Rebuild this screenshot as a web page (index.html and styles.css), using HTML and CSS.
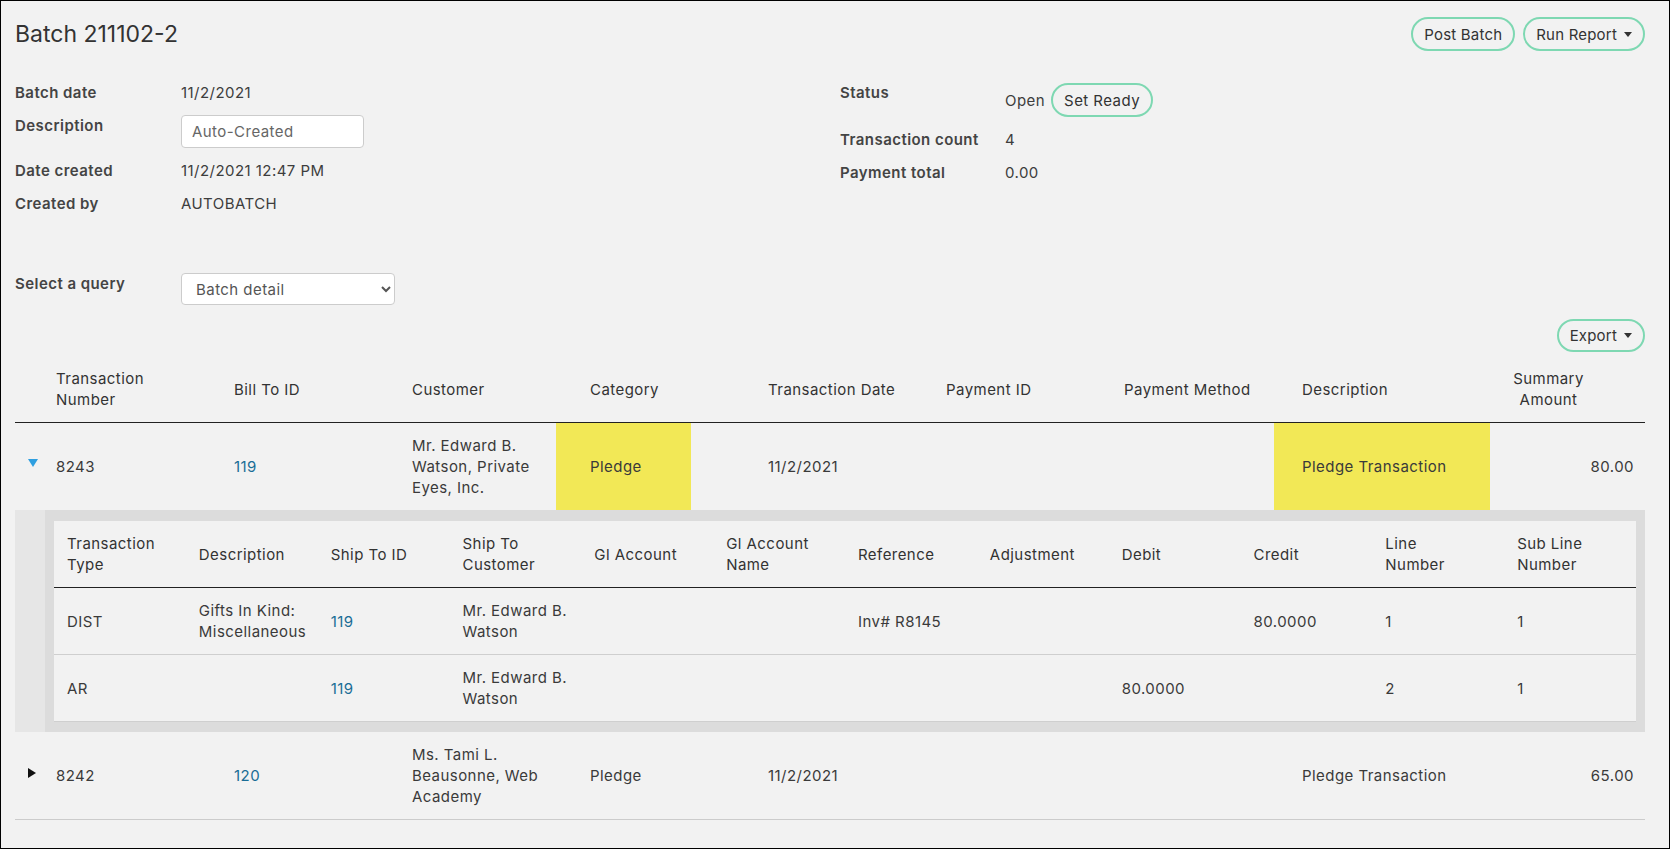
FILE: index.html
```html
<!DOCTYPE html>
<html lang="en">
<head>
    <meta charset="UTF-8">
    <meta name="viewport" content="width=device-width, initial-scale=1.0">
    <title>Batch 211102-2</title>
    <link rel="stylesheet" href="styles.css">
</head>
<body>
    <div class="page">
        <header class="top">
            <h1>Batch 211102-2</h1>
            <div class="actions">
                <button class="pill">Post Batch</button>
                <button class="pill">Run Report <svg class="caret" width="8" height="5" viewBox="0 0 8 5"><path d="M0 0h8L4 5z"/></svg></button>
            </div>
        </header>

        <section class="info">
            <div class="fields">
                <div class="field"><span class="label">Batch date</span><span class="value">11/2/2021</span></div>
                <div class="field"><span class="label">Description</span><input class="text-input" type="text" value="Auto-Created"></div>
                <div class="field"><span class="label">Date created</span><span class="value">11/2/2021 12:47 PM</span></div>
                <div class="field"><span class="label">Created by</span><span class="value">AUTOBATCH</span></div>
            </div>
            <div class="fields right">
                <div class="field status"><span class="label">Status</span><span class="value status-value">Open <button class="pill">Set Ready</button></span></div>
                <div class="field"><span class="label">Transaction count</span><span class="value">4</span></div>
                <div class="field"><span class="label">Payment total</span><span class="value">0.00</span></div>
            </div>
        </section>

        <div class="field query">
            <span class="label">Select a query</span>
            <select class="query-select">
                <option>Batch detail</option>
            </select>
        </div>

        <div class="toolbar">
            <button class="pill small">Export <svg class="caret" width="8" height="5" viewBox="0 0 8 5"><path d="M0 0h8L4 5z"/></svg></button>
        </div>

        <div class="batch-table">
            <div class="row head">
                <div class="cell"></div>
                <div class="cell">Transaction<br>Number</div>
                <div class="cell">Bill To ID</div>
                <div class="cell">Customer</div>
                <div class="cell">Category</div>
                <div class="cell">Transaction Date</div>
                <div class="cell">Payment ID</div>
                <div class="cell">Payment Method</div>
                <div class="cell">Description</div>
                <div class="cell amount">Summary<br>Amount</div>
            </div>

            <div class="row open">
                <div class="cell toggle"><svg class="arrow-down" width="10" height="8" viewBox="0 0 10 8"><path d="M0 0h10L5 8z"/></svg></div>
                <div class="cell">8243</div>
                <div class="cell"><a href="#">119</a></div>
                <div class="cell">Mr. Edward B.<br>Watson, Private<br>Eyes, Inc.</div>
                <div class="cell hl hl-cat">Pledge</div>
                <div class="cell">11/2/2021</div>
                <div class="cell"></div>
                <div class="cell"></div>
                <div class="cell hl hl-desc">Pledge Transaction</div>
                <div class="cell amount">80.00</div>
            </div>

            <div class="detail">
                <div class="detail-box">
                    <div class="sub">
                        <div class="sub-row sub-head">
                            <div class="sub-cell">Transaction<br>Type</div>
                            <div class="sub-cell">Description</div>
                            <div class="sub-cell">Ship To ID</div>
                            <div class="sub-cell">Ship To<br>Customer</div>
                            <div class="sub-cell">Gl Account</div>
                            <div class="sub-cell">Gl Account<br>Name</div>
                            <div class="sub-cell">Reference</div>
                            <div class="sub-cell">Adjustment</div>
                            <div class="sub-cell">Debit</div>
                            <div class="sub-cell">Credit</div>
                            <div class="sub-cell">Line<br>Number</div>
                            <div class="sub-cell">Sub Line<br>Number</div>
                        </div>
                        <div class="sub-row">
                            <div class="sub-cell">DIST</div>
                            <div class="sub-cell">Gifts In Kind:<br>Miscellaneous</div>
                            <div class="sub-cell"><a href="#">119</a></div>
                            <div class="sub-cell">Mr. Edward B.<br>Watson</div>
                            <div class="sub-cell"></div>
                            <div class="sub-cell"></div>
                            <div class="sub-cell">Inv# R8145</div>
                            <div class="sub-cell"></div>
                            <div class="sub-cell"></div>
                            <div class="sub-cell">80.0000</div>
                            <div class="sub-cell">1</div>
                            <div class="sub-cell">1</div>
                        </div>
                        <div class="sub-row">
                            <div class="sub-cell">AR</div>
                            <div class="sub-cell"></div>
                            <div class="sub-cell"><a href="#">119</a></div>
                            <div class="sub-cell">Mr. Edward B.<br>Watson</div>
                            <div class="sub-cell"></div>
                            <div class="sub-cell"></div>
                            <div class="sub-cell"></div>
                            <div class="sub-cell"></div>
                            <div class="sub-cell">80.0000</div>
                            <div class="sub-cell"></div>
                            <div class="sub-cell">2</div>
                            <div class="sub-cell">1</div>
                        </div>
                    </div>
                </div>
            </div>

            <div class="row closed">
                <div class="cell toggle"><svg class="arrow-right" width="8" height="10" viewBox="0 0 8 10"><path d="M0 0l8 5-8 5z"/></svg></div>
                <div class="cell">8242</div>
                <div class="cell"><a href="#">120</a></div>
                <div class="cell">Ms. Tami L.<br>Beausonne, Web<br>Academy</div>
                <div class="cell">Pledge</div>
                <div class="cell">11/2/2021</div>
                <div class="cell"></div>
                <div class="cell"></div>
                <div class="cell">Pledge Transaction</div>
                <div class="cell amount">65.00</div>
            </div>
        </div>
    </div>
</body>
</html>
```

FILE: styles.css
```css
html, body {
    margin: 0;
    background-color: #f2f2f2;
}
body {
    font-family: Inter, "Noto Sans", sans-serif;
    font-size: 15px;
    letter-spacing: 0.45px;
    color: #3a3a3a;
}
.page {
    box-sizing: border-box;
    height: 849px;
    border: 1px solid #000;
    padding: 16px 24px 0 14px;
    overflow: hidden;
}
a {
    color: #1a6d96;
    text-decoration: none;
}
.top {
    display: flex;
    justify-content: space-between;
    align-items: center;
    height: 34px;
}
h1 {
    margin: 0;
    font-size: 23px;
    font-weight: 400;
    letter-spacing: 0;
    color: #333;
}
.actions {
    display: flex;
    gap: 8px;
}
.pill {
    display: inline-flex;
    align-items: center;
    gap: 7px;
    height: 34px;
    padding: 0 11px;
    border: 2px solid #7ed8b2;
    border-radius: 17px;
    background: none;
    font-family: inherit;
    font-size: 15px;
    letter-spacing: 0.2px;
    color: #333;
    cursor: pointer;
}
.pill.small {
    height: 33px;
}
.caret {
    fill: #333;
}

.info {
    display: grid;
    grid-template-columns: 825px 1fr;
    margin-top: 31px;
}
.fields {
    display: flex;
    flex-direction: column;
    gap: 12px;
}
.field {
    display: grid;
    grid-template-columns: 166px auto;
    align-items: start;
    line-height: 21px;
}
.fields.right .field {
    grid-template-columns: 165px auto;
}
.label {
    font-weight: 600;
    color: #444;
}
.value {
    color: #3d3d3d;
}
.status .status-value {
    display: flex;
    align-items: center;
    gap: 6px;
    margin-top: 1px;
}
.status .pill {
    letter-spacing: 0.45px;
}
.text-input {
    box-sizing: border-box;
    width: 183px;
    height: 33px;
    padding: 0 10px;
    border: 1px solid #ccc;
    border-radius: 4px;
    background: #fff;
    font-family: inherit;
    font-size: 15px;
    letter-spacing: inherit;
    color: #666;
}

.query {
    margin-top: 59px;
}
.query-select {
    box-sizing: border-box;
    width: 214px;
    height: 32px;
    padding: 0 10px;
    border: 1px solid #ccc;
    border-radius: 4px;
    background: #fff;
    font-family: inherit;
    font-size: 15px;
    letter-spacing: inherit;
    color: #555;
}

.toolbar {
    display: flex;
    justify-content: flex-end;
    margin-top: 14px;
}

.row {
    display: grid;
    grid-template-columns: 41px repeat(8, 178px) 1fr;
    line-height: 21px;
}
.row.head {
    border-bottom: 1px solid #222;
    color: #333;
}
.row.head .cell {
    padding: 16px 0 12px;
}
.row.closed {
    border-bottom: 1px solid #ccc;
}
.cell {
    display: flex;
    align-items: center;
    padding: 12px 0;
}
.cell.amount {
    justify-content: flex-end;
    padding-right: 11px;
}
.row.head .cell.amount {
    justify-content: center;
    text-align: center;
    padding-right: 28px;
}
.toggle {
    padding-left: 13px;
}
.arrow-down {
    fill: #2f9fe0;
    margin-bottom: 8px;
}
.arrow-right {
    fill: #111;
    margin-bottom: 6px;
}
.hl {
    position: relative;
    z-index: 0;
}
.hl::before {
    content: "";
    position: absolute;
    top: 0;
    bottom: 0;
    background: #f2e856;
    z-index: -1;
}
.hl-cat::before {
    left: -34px;
    width: 135px;
}
.hl-desc::before {
    left: -28px;
    width: 216px;
}

.detail {
    background: #e6e6e6;
    padding-left: 30px;
}
.detail-box {
    background: #dcdcdc;
    padding: 11px 9px 10px 9px;
}
.sub {
    background: #f2f2f2;
}
.sub-row {
    display: grid;
    grid-template-columns: repeat(12, 1fr);
    line-height: 21px;
    border-bottom: 1px solid #cfcfcf;
}
.sub-row.sub-head {
    border-bottom-color: #222;
    color: #333;
}
.sub-cell {
    display: flex;
    align-items: center;
    padding: 12px 0 12px 13px;
}
```
